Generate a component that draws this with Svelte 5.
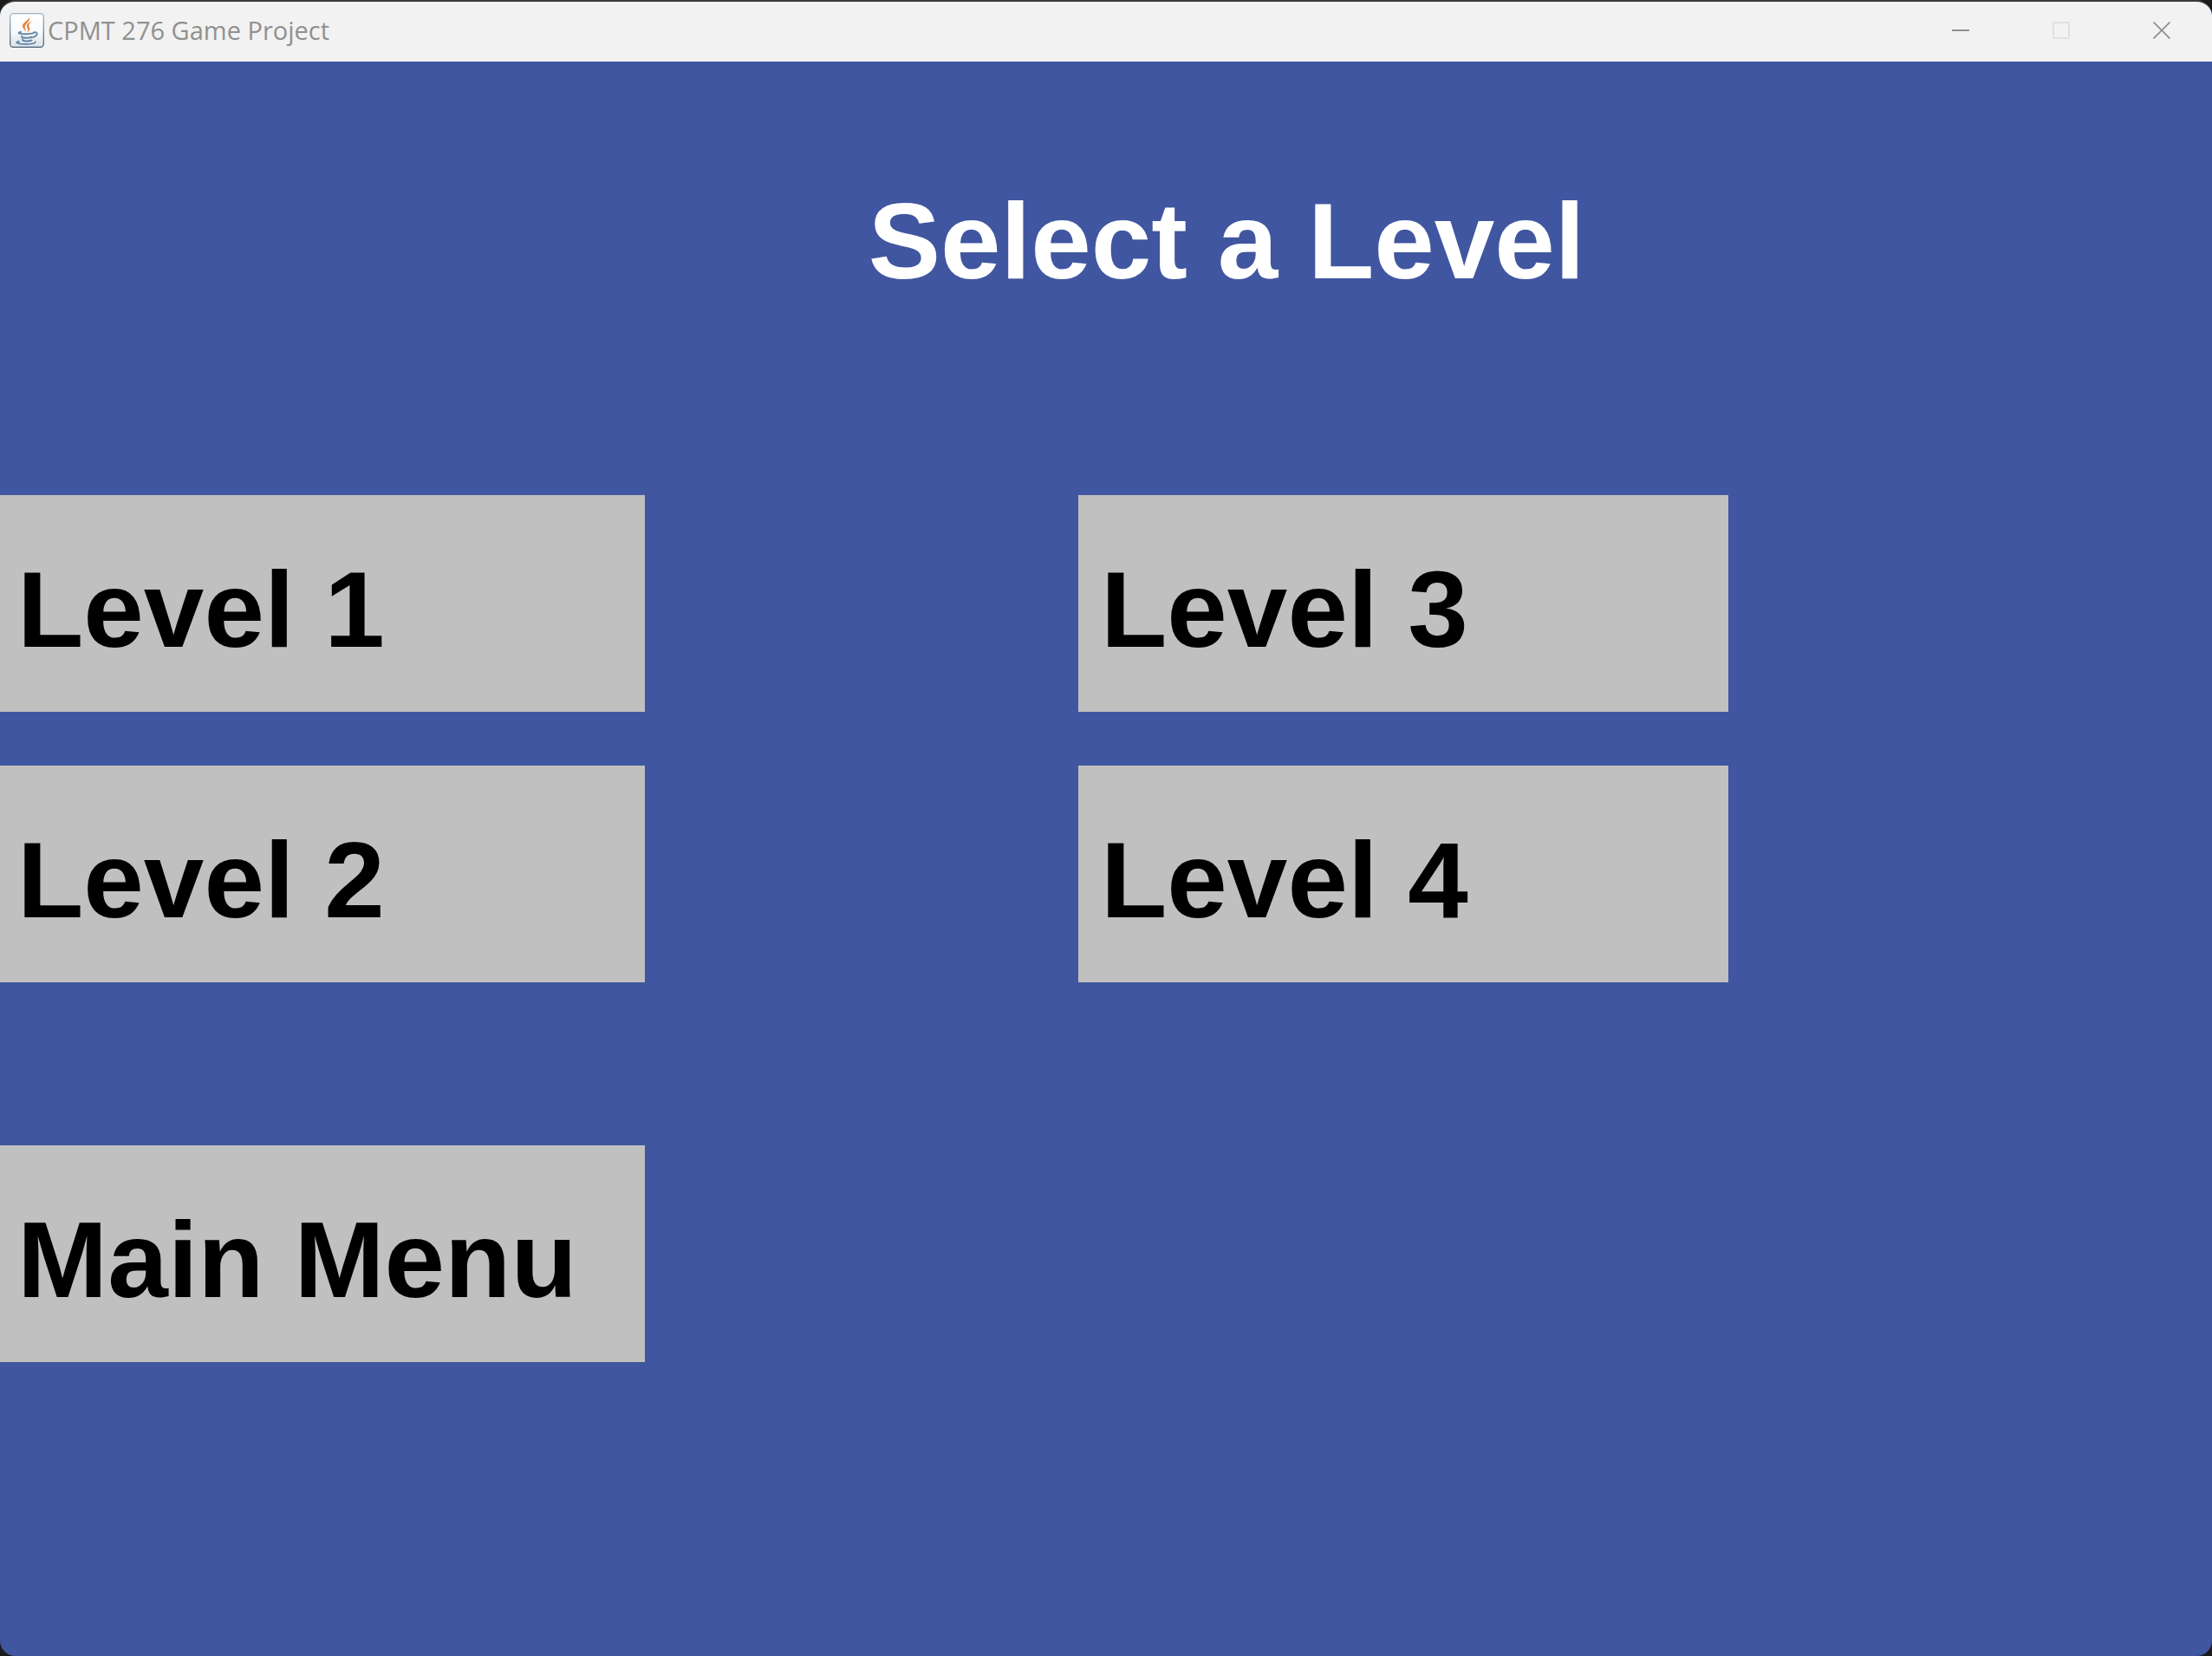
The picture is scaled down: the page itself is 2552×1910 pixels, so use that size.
<script>
  const levels = [1, 3, 2, 4];
</script>

<div class="desktop">
  <div class="window">
    <header class="titlebar">
      <svg class="app-icon" viewBox="0 0 40 40" aria-hidden="true">
        <defs>
          <linearGradient id="tile" x1="0" y1="0" x2="0" y2="1">
            <stop offset="0" stop-color="#ffffff" />
            <stop offset="0.5" stop-color="#fafbfc" />
            <stop offset="1" stop-color="#dde3e8" />
          </linearGradient>
          <linearGradient id="edge" x1="0" y1="0" x2="0" y2="1">
            <stop offset="0" stop-color="#9fb6c6" />
            <stop offset="1" stop-color="#45607a" />
          </linearGradient>
        </defs>
        <rect x="0.7" y="0.7" width="38.6" height="38.6" rx="3.5" fill="url(#tile)" stroke="url(#edge)" stroke-width="1.3" />
        <g fill="#e8813a">
          <path d="M22.5 4C24 8.500 14.500 10.500 15 15.500C15.300 18 17.500 19.500 19.500 21.500C18.500 18.500 17 16.800 18 14.500C19.500 11.500 25 9 22.500 4Z" />
          <path d="M26.500 9.500C22 11 19 13.200 20 16C20.600 17.600 22.200 19 20.600 22C24.200 19.600 23.700 17.800 22.600 16.200C21.300 14 23 11.800 26.500 9.500Z" />
        </g>
        <g fill="none" stroke="#6486a6" stroke-linecap="round">
          <path d="M13 22C8.500 22.500 10.500 24.300 19 24.300C23 24.300 25.500 24 28 23.200" stroke-width="1.900" />
          <path d="M28 22.300C32.500 21 33.500 25.500 27.500 28" stroke-width="1.800" />
          <path d="M14 27C13 29.200 22 29.300 26 27.800" stroke-width="2" />
          <path d="M15 30.600C14.500 33 22 33 25.500 31.500" stroke-width="2" />
          <path d="M11 32.700C4 34.200 11 36 19 35.800C25 35.800 29.500 34.800 30 33.200" stroke-width="1.700" />
        </g>
      </svg>
      <span class="caption">CPMT 276 Game Project</span>
      <div class="controls">
        <button type="button" aria-label="Minimize">
          <svg viewBox="0 0 20 20" aria-hidden="true"><path d="M0 10H20" stroke="#909090" stroke-width="2" /></svg>
        </button>
        <button type="button" aria-label="Maximize" disabled>
          <svg viewBox="0 0 20 20" aria-hidden="true"><rect x="1" y="1" width="18" height="18" rx="1.500" fill="none" stroke="#e0e0e0" stroke-width="2" /></svg>
        </button>
        <button type="button" aria-label="Close">
          <svg viewBox="0 0 20 20" aria-hidden="true"><path d="M0.500 0.500L19.500 19.500M19.500 0.500L0.500 19.500" stroke="#909090" stroke-width="1.800" /></svg>
        </button>
      </div>
    </header>

    <main>
      <h1>Select a Level</h1>
      <div class="levels">
        {#each levels as level}
          <button type="button" class="choice">Level {level}</button>
        {/each}
      </div>
      <div class="levels">
        <button type="button" class="choice">Main Menu</button>
      </div>
    </main>
  </div>
</div>

<style>
  :global(body) {
    margin: 0;
    background: #1c1c1c;
  }

  .desktop {
    display: flex;
    min-height: 100vh;
    overflow: hidden;
    background: #1c1c1c;
  }

  .window {
    flex: 1;
    display: flex;
    flex-direction: column;
    border-top: 2px solid #3b3b3b;
    border-radius: 18px;
    overflow: hidden;
    background: #4056a0;
  }

  .titlebar {
    display: flex;
    align-items: center;
    height: 66px;
    padding: 0 0 3px 11px;
    background: #f2f2f2;
    color: #909090;
  }

  .app-icon {
    width: 40px;
    height: 40px;
  }

  .caption {
    margin-left: 4px;
    font: 29px/40px "Open Sans", sans-serif;
    white-space: nowrap;
  }

  .controls {
    display: flex;
    align-self: stretch;
    margin-left: auto;
  }

  .controls button {
    display: flex;
    align-items: center;
    justify-content: center;
    width: 116px;
    padding: 0;
    border: 0;
    background: none;
  }

  .controls svg {
    width: 20px;
    height: 20px;
  }

  main {
    flex: 1;
    display: flex;
    flex-direction: column;
    padding-top: 137px;
    font-family: "Liberation Sans", Arial, sans-serif;
  }

  h1 {
    margin: 0 0 223px 39.25%;
    color: #fff;
    font-size: 125px;
    font-weight: 700;
    line-height: 140px;
  }

  .levels {
    display: grid;
    grid-template-columns: repeat(2, minmax(0, 750px));
    column-gap: min(500px, 20vw);
    row-gap: 62px;
    margin: 0 0 188px -6px;
  }

  .choice {
    padding: 62px 26px 48px;
    border: 0;
    background: #c0c0c0;
    color: #000;
    font: 700 125px/140px "Liberation Sans", Arial, sans-serif;
    text-align: left;
    white-space: nowrap;
  }
</style>
